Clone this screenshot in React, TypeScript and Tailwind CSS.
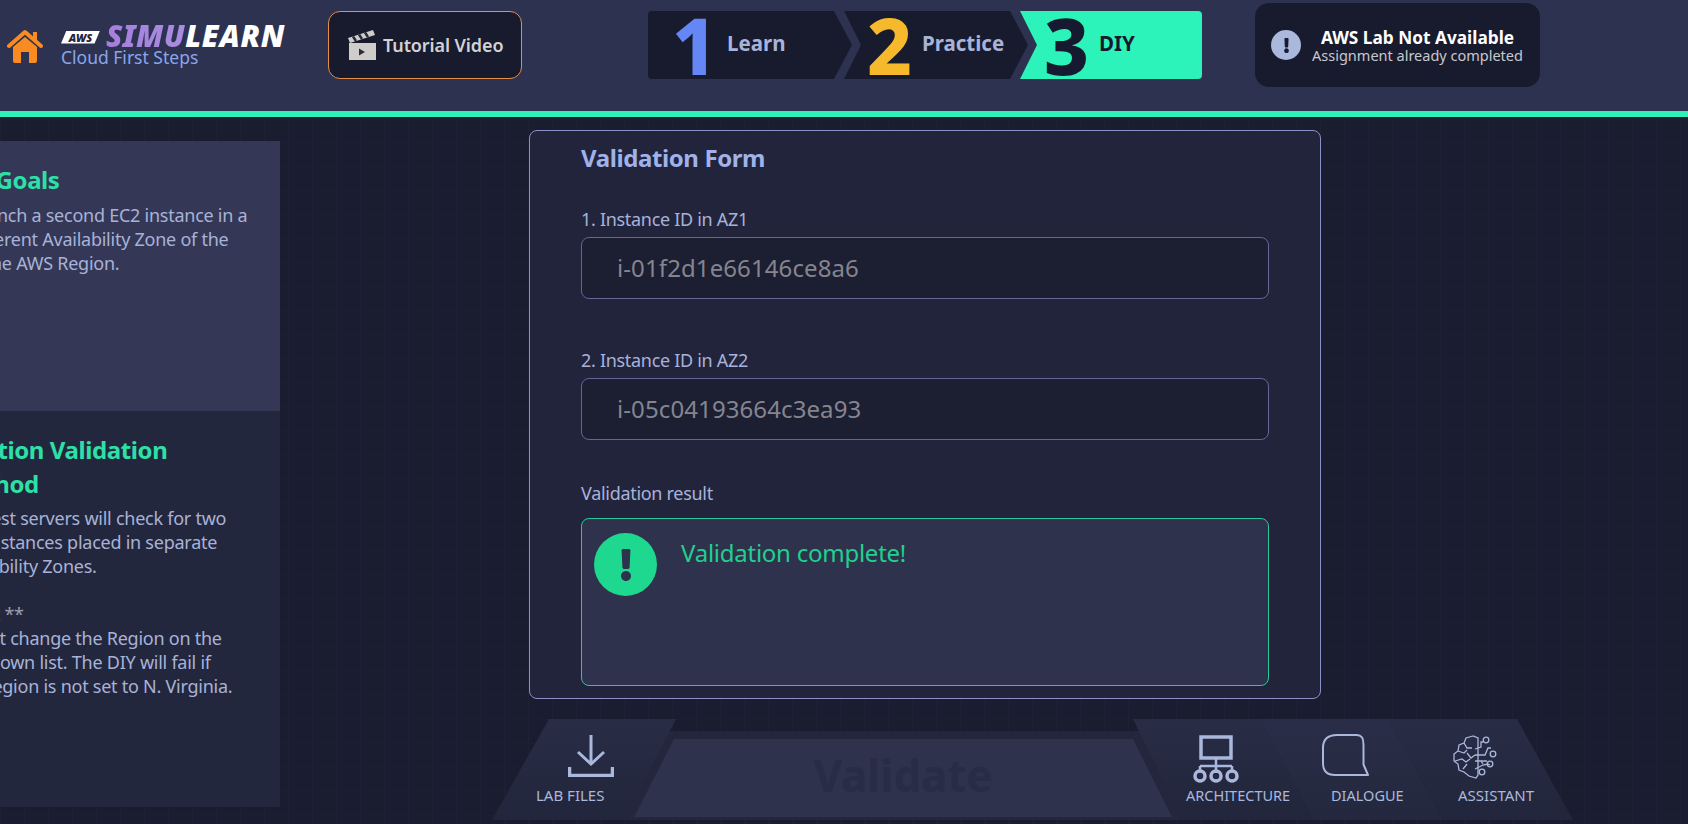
import { Fragment } from 'react'
import { FaExclamation } from 'react-icons/fa'

const font = { fontFamily: '"Noto Sans", "Open Sans", sans-serif' }

function HomeIcon() {
  return (
    <svg viewBox="0 0 36 34" className="w-[36px] h-[34px] shrink-0">
      <path d="M26 3h4v9l-4-3z" fill="#f88c22" />
      <path d="M2 17 18 3l16 14" fill="none" stroke="#f88c22" strokeWidth="4" strokeLinecap="round" strokeLinejoin="round" />
      <path d="M6 18 18 8l12 10v14a2 2 0 0 1-2 2h-6V23h-8v11H8a2 2 0 0 1-2-2z" fill="#f88c22" />
    </svg>
  )
}

function ClapperIcon() {
  return (
    <svg viewBox="0 0 28 30" className="w-[28px] h-[30px] shrink-0">
      <rect x="1" y="13" width="27" height="17" fill="#cfcdca" />
      <path d="M0 8 25 0l2 5L2 13z" fill="#cfcdca" />
      <path d="M5 6.500 8 11M11 4.500 14 9M17 2.500 20 7" stroke="#2a2c3c" strokeWidth="2.500" />
      <path d="M11 18.500v7l6-3.500z" fill="#2a2c3c" />
    </svg>
  )
}

function Logo() {
  return (
    <div className="flex flex-col ml-[18px] w-[226px]">
      <div className="flex items-center h-[26px] mt-[-3px]">
        <span className="w-[39px] h-[13px] bg-white text-[#23263e] text-[11px] leading-[13px] font-black italic text-center [clip-path:polygon(14%_0,100%_0,86%_100%,0_100%)] mt-[3px]">
          AWS
        </span>
        <span className="ml-[6px] text-[30px] leading-[26px] font-black italic tracking-[0.4px] bg-gradient-to-r from-[#a47fdc] to-[#a98de0] bg-clip-text text-transparent">
          SIMU
        </span>
        <span className="text-[30px] leading-[26px] font-black italic tracking-[0.8px] text-white">LEARN</span>
      </div>
      <span className="-mt-[1px] text-[17.500px] leading-[18px] text-[#8ba5ea]">Cloud First Steps</span>
    </div>
  )
}

function Steps() {
  return (
    <div className="flex h-[68px] w-[554px] ml-[126px]">
      <div className="flex items-center w-[204px] pl-[24px] bg-[#181b2e] rounded-l-[4px] [clip-path:polygon(0_0,186px_0,100%_50%,186px_100%,0_100%)]">
        <span className="text-[78px] leading-none font-extrabold text-[#6487f5] w-[55px]">1</span>
        <span className="text-[20.500px] font-bold text-[#a7b3d8] pb-[3px]">Learn</span>
      </div>
      <div className="flex items-center w-[184px] -ml-[8px] pl-[23px] bg-[#181b2e] [clip-path:polygon(0_0,166px_0,100%_50%,166px_100%,0_100%,17px_50%)]">
        <span className="text-[78px] leading-none font-extrabold text-[#f6b92b] w-[55px]">2</span>
        <span className="text-[20.500px] font-bold text-[#a7b3d8] pb-[3px]">Practice</span>
      </div>
      <div className="flex items-center flex-1 -ml-[8px] pl-[24px] bg-[#2cf3b9] rounded-r-[4px] [clip-path:polygon(0_0,100%_0,100%_100%,0_100%,17px_50%)]">
        <span className="text-[78px] leading-none font-extrabold text-[#161a30] w-[55px]">3</span>
        <span className="text-[20.500px] font-bold text-[#161a30] pb-[3px]">DIY</span>
      </div>
    </div>
  )
}

function Header() {
  return (
    <header className="h-[117px] shrink-0 bg-[#2d3250] border-b-[6px] border-[#2ff0b8] flex items-start">
      <div className="flex items-center h-[111px] pl-[7px] pb-[20px]">
        <HomeIcon />
        <Logo />
      </div>
      <button className="mt-[11px] ml-[41px] w-[194px] h-[68px] flex items-center pl-[19px] gap-[7px] bg-[#181b2e] border border-[#e58f45] rounded-[12px] text-[18px] font-semibold tracking-[-0.1px] text-[#d2d2d4]">
        <ClapperIcon />
        Tutorial Video
      </button>
      <div className="mt-[11px]">
        <Steps />
      </div>
      <div className="mt-[3px] ml-[53px] w-[285px] h-[84px] flex items-center pl-[16px] bg-[#181b2e] rounded-[14px]">
        <span className="w-[30px] h-[30px] rounded-full bg-[#a9b8dc] flex items-center justify-center text-[#181b2e] text-[15px]">
          <FaExclamation />
        </span>
        <div className="flex-1 flex flex-col items-center pr-[6px]">
          <span className="text-[17.250px] leading-[20px] font-bold text-white">AWS Lab Not Available</span>
          <span className="text-[14.500px] leading-[15px] text-[#c8c8ce]">Assignment already completed</span>
        </div>
      </div>
    </header>
  )
}

function SidePanel() {
  return (
    <aside className="w-[280px] shrink-0 mt-[24px] h-[666px] overflow-hidden flex flex-col">
      <section className="h-[270px] bg-[#343856] pt-[21px]">
        <h2 className="-ml-[51px] text-[24px] leading-[36px] font-bold tracking-[-0.4px] text-[#2de0a8] whitespace-nowrap">DIY Goals</h2>
        <p className="-ml-[33px] mt-[5px] text-[18px] leading-[24px] tracking-[-0.25px] text-[#a8b2d8] whitespace-nowrap">
          Launch a second EC2 instance in a
          <br />
          different Availability Zone of the
          <br />
          same AWS Region.
        </p>
      </section>
      <section className="flex-1 bg-[#23273d] pt-[22px]">
        <h2 className="-ml-[52px] text-[24px] leading-[34px] font-bold tracking-[-0.4px] text-[#2de0a8] whitespace-nowrap">
          Solution Validation
          <br />
          Method
        </h2>
        <p className="-ml-[50px] mt-[5px] text-[18px] leading-[24px] tracking-[-0.25px] text-[#a8b2d8] whitespace-nowrap">
          The test servers will check for two
          <br />
          EC2 instances placed in separate
          <br />
          Availability Zones.
        </p>
        <p className="-ml-[50px] mt-[24px] text-[18px] leading-[24px] tracking-[-0.25px] text-[#a8b2d8] whitespace-nowrap">
          <span className="ml-[11px] text-[#9c9ea8]">Alert **</span>
          <br />
          Do not change the Region on the
          <br />
          dropdown list. The DIY will fail if
          <br />
          the Region is not set to N. Virginia.
        </p>
      </section>
    </aside>
  )
}

function Field({ label, value }: { label: string; value: string }) {
  return (
    <Fragment>
      <label className="block text-[18px] leading-[24px] tracking-[-0.3px] text-[#a8b2d8]">{label}</label>
      <div className="mt-[6px] h-[62px] flex items-center pl-[35px] pb-[1px] bg-[#1c1e32] border border-[#62679a] rounded-[8px] text-[24px] tracking-[0.1px] text-[#85858f]">
        {value}
      </div>
    </Fragment>
  )
}

function ValidationForm() {
  return (
    <div className="ml-[249px] mt-[13px] w-[792px] h-[569px] bg-[#22243c] border border-[#8a90c8] rounded-[8px] pl-[51px] pr-[51px] pt-[9px]">
      <h2 className="text-[24px] leading-[36px] font-bold tracking-[-0.4px] text-[#a0b2ea]">Validation Form</h2>
      <div className="mt-[31px]">
        <Field label="1. Instance ID in AZ1" value="i-01f2d1e66146ce8a6" />
      </div>
      <div className="mt-[49px]">
        <Field label="2. Instance ID in AZ2" value="i-05c04193664c3ea93" />
      </div>
      <label className="block mt-[41px] text-[18px] leading-[24px] tracking-[-0.3px] text-[#a8b2d8]">Validation result</label>
      <div className="mt-[13px] h-[168px] flex items-start pl-[12px] pt-[14px] bg-[#2e324c] border border-[#2bc79a] rounded-[8px]">
        <span className="w-[63px] h-[63px] rounded-full bg-[#1fd88f] flex items-center justify-center text-[#2e324c] text-[32px] shrink-0">
          <FaExclamation />
        </span>
        <span className="ml-[24px] mt-[3px] text-[24px] leading-[34px] tracking-[-0.25px] text-[#20d08f]">Validation complete!</span>
      </div>
    </div>
  )
}

function DownloadIcon() {
  return (
    <svg viewBox="0 0 46 42" className="w-[46px] h-[42px] ml-[32px]" fill="none" stroke="#aab8dc" strokeWidth="3">
      <path d="M23 0v28" />
      <path d="M10 17 23 29 36 17" />
      <path d="M1.500 32v8.500h43V32" strokeWidth="3.500" />
    </svg>
  )
}

function ArchitectureIcon() {
  return (
    <svg viewBox="0 0 46 48" className="w-[46px] h-[48px] ml-[7px]" fill="none" stroke="#aab8dc" strokeWidth="3.500">
      <rect x="8" y="2" width="30" height="21" />
      <path d="M23 23v15M7 31h32M7 31v5M39 31v5" strokeWidth="2.500" />
      <circle cx="7" cy="41" r="5" />
      <circle cx="23" cy="41" r="5" />
      <circle cx="39" cy="41" r="5" />
    </svg>
  )
}

function DialogueIcon() {
  return (
    <svg viewBox="0 0 47 43" className="w-[47px] h-[43px] -ml-[9px]" fill="none" stroke="#aab8dc" strokeWidth="2">
      <path d="M15 1h20c6 0 6.500 5 6.500 10v19.500L46 41H13C5 41 1 37 1 29V14C1 5 6 1 15 1z" strokeLinejoin="round" />
    </svg>
  )
}

function AssistantIcon() {
  return (
    <svg viewBox="0 0 44 44" className="w-[44px] h-[44px] -ml-[5px]" fill="none" stroke="#aab8dc" strokeWidth="1.300">
      <path d="M20 1 13 3l-2 5-5 2-1 6-4 3 0 7 4 3 1 6 5 2 5 4 7 2 2-3V3z" />
      <path d="M5 16l6 2 3-3M2 26l7-2 4 3 4-3M11 8l3 5 5 0M10 34l4-5M14 18l4 5 4-3" />
      <path d="M22 20h10l3-7 3 0M22 14l6-2V7h2M22 26h12M22 34l8-4 5-1 2 1M28 26l2 3" />
      <circle cx="33" cy="5" r="2.800" />
      <circle cx="40" cy="19" r="2.800" />
      <circle cx="37" cy="29" r="2.800" />
      <circle cx="29" cy="37" r="2.800" />
    </svg>
  )
}

function ToolBar() {
  return (
    <div className="flex items-end mt-[20px] ml-[212px] h-[101px]">
      <div className="relative z-10 w-[184px] h-[101px] shrink-0 pt-[16px] pl-[44px] flex flex-col items-start bg-gradient-to-b from-[#282c45] to-[#22263c] [clip-path:polygon(57px_0,100%_0,132px_100%,0_100%)]">
        <DownloadIcon />
        <span className="mt-[7px] text-[15px] leading-[22px] text-[#aab8dc]">LAB FILES</span>
      </div>
      {/* dark frame runs under both tab groups, only the button on it is slanted */}
      <div className="w-[574px] h-[89px] -ml-[60px] shrink-0 bg-[#23263c] pt-[8px] pl-[18px]">
        <div className="w-[538px] h-[78px] pb-[7px] bg-[#2e324c] flex items-center justify-center text-[44px] font-bold tracking-[-0.1px] text-[#282c46] [clip-path:polygon(40px_0,499px_0,100%_100%,0_100%)]">
          Validate
        </div>
      </div>
      <div className="relative z-10 w-[180px] h-[101px] -ml-[57px] shrink-0 pt-[16px] pl-[53px] flex flex-col items-start bg-gradient-to-b from-[#282c45] to-[#22263c] [clip-path:polygon(0_0,127px_0,100%_100%,50px_100%)]">
        <ArchitectureIcon />
        <span className="mt-[1px] text-[14.500px] leading-[22px] text-[#aab8dc]">ARCHITECTURE</span>
      </div>
      <div className="relative z-10 w-[183px] h-[101px] -ml-[53px] shrink-0 pt-[15px] pl-[71px] flex flex-col items-start bg-gradient-to-b from-[#292d47] to-[#24283e] [clip-path:polygon(0_0,129px_0,100%_100%,53px_100%)]">
        <DialogueIcon />
        <span className="mt-[7px] text-[14.500px] leading-[22px] text-[#aab8dc]">DIALOGUE</span>
      </div>
      <div className="relative z-10 w-[184px] h-[101px] -ml-[54px] shrink-0 pt-[16px] pl-[69px] flex flex-col items-start bg-gradient-to-b from-[#282c45] to-[#22263c] [clip-path:polygon(0_0,128px_0,100%_100%,54px_100%)]">
        <AssistantIcon />
        <span className="mt-[5px] text-[15px] leading-[22px] text-[#aab8dc]">ASSISTANT</span>
      </div>
    </div>
  )
}

export default function App() {
  return (
    <div
      style={font}
      className="h-screen overflow-hidden flex flex-col bg-[#1a1d30] bg-[linear-gradient(90deg,#1e2136_1px,transparent_1px),linear-gradient(0deg,#1c1f33_1px,transparent_1px)] bg-[size:24px_24px]"
    >
      <Header />
      <main className="flex flex-1">
        <SidePanel />
        <div className="flex-1 flex flex-col">
          <ValidationForm />
          <ToolBar />
        </div>
      </main>
    </div>
  )
}
